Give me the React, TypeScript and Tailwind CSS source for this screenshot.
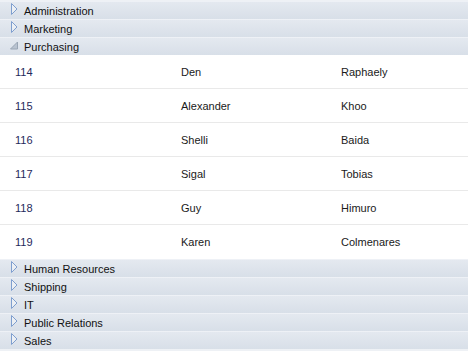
import React from "react";

const font = { fontFamily: "Tahoma, 'Liberation Sans', 'DejaVu Sans', sans-serif" };

function Collapsed() {
  return (
    <svg width="8" height="12" viewBox="0 0 8 12" className="shrink-0">
      <path d="M1.5 0.5 L7 6 L1.5 11.5 Z" fill="white" fillOpacity="0.4" stroke="#7f9fcf" strokeWidth="1" />
    </svg>
  );
}

function Expanded() {
  return (
    <svg width="8" height="12" viewBox="0 0 8 12" className="shrink-0">
      <path d="M7.5 3 L7.5 10 L0.5 10 Z" fill="#b9c3d0" stroke="#9aa6b5" strokeWidth="1" />
    </svg>
  );
}

function Header({ label, open }: { label: string; open?: boolean }) {
  return (
    <div className="h-[18px] flex items-center pl-[10px] pt-[2px] border-t border-t-[#eef1f6] bg-gradient-to-b from-[#e4e9f0] to-[#d8dfe8] text-[11px] text-[#111]">
      <div className="w-[14px] flex items-start -mt-[5px]">{open ? <Expanded /> : <Collapsed />}</div>
      <span className="leading-none">{label}</span>
    </div>
  );
}

const rows = [
  ["114", "Den", "Raphaely"],
  ["115", "Alexander", "Khoo"],
  ["116", "Shelli", "Baida"],
  ["117", "Sigal", "Tobias"],
  ["118", "Guy", "Himuro"],
  ["119", "Karen", "Colmenares"],
];

export default function App() {
  return (
    <div className="w-[468px] h-[351px] bg-[#eef1f5] overflow-hidden pt-[1px]" style={font}>
      <Header label="Administration" />
      <Header label="Marketing" />
      <Header label="Purchasing" open />
      <div className="bg-white">
        {rows.map((r, i) => (
          <div
            key={r[0]}
            className={`h-[34px] flex items-center pt-[1px] text-[11px] ${i < rows.length - 1 ? "border-b border-b-[#e9e9e9]" : ""}`}
          >
            <span className="w-[181px] pl-[15px] text-[#1f2a5c]">{r[0]}</span>
            <span className="w-[160px] text-[#1a1a1a]">{r[1]}</span>
            <span className="text-[#1a1a1a]">{r[2]}</span>
          </div>
        ))}
      </div>
      <Header label="Human Resources" />
      <Header label="Shipping" />
      <Header label="IT" />
      <Header label="Public Relations" />
      <Header label="Sales" />
    </div>
  );
}
